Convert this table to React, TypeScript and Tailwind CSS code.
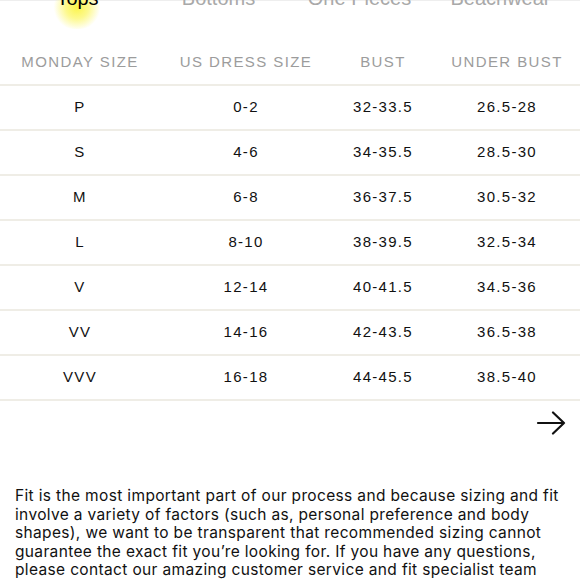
const tabs = ['Tops', 'Bottoms', 'One Pieces', 'Beachwear'];

const rows = [
  ['P', '0-2', '32-33.5', '26.5-28'],
  ['S', '4-6', '34-35.5', '28.5-30'],
  ['M', '6-8', '36-37.5', '30.5-32'],
  ['L', '8-10', '38-39.5', '32.5-34'],
  ['V', '12-14', '40-41.5', '34.5-36'],
  ['VV', '14-16', '42-43.5', '36.5-38'],
  ['VVV', '16-18', '44-45.5', '38.5-40'],
];

const cols = 'grid grid-cols-[160px_172px_102px_146px]';

export default function App() {
  return (
    <div className="w-[580px] h-[580px] overflow-hidden bg-white font-['Liberation_Sans',Arial,sans-serif] text-[#111]">
      {/* tabs, scrolled mostly out of view */}
      <div className="relative h-[14px] border-t border-[#eee]">
        <div className="absolute left-[52px] top-[-16px] w-[50px] h-[44px] rounded-full bg-[radial-gradient(circle,#fbf44a_0%,#fdf98f_35%,rgba(255,255,255,0)_70%)]" />
        <div className="relative flex pl-[7px] -mt-[15px] text-[20px] leading-[24px]">
          {tabs.map((t, i) => (
            <div
              key={t}
              className={(i === 0 ? 'text-black ' : 'text-[#a9a9a9] ') + 'w-[141px] text-center'}
            >
              {t}
            </div>
          ))}
        </div>
      </div>

      {/* size table */}
      <div className={cols + ' h-[70px] items-end pb-[11px] text-[15px] tracking-[1.4px] text-[#9c9c9c]'}>
        <div className="text-center">MONDAY SIZE</div>
        <div className="text-center">US DRESS SIZE</div>
        <div className="text-center">BUST</div>
        <div className="text-center">UNDER BUST</div>
      </div>
      {rows.map((r) => (
        <div key={r[0]} className={cols + ' h-[45px] items-center border-t-2 border-[#efede6] text-[15px] tracking-[1.3px]'}>
          {r.map((c, j) => (
            <div key={j} className="text-center">
              {c}
            </div>
          ))}
        </div>
      ))}
      <div className="border-t-2 border-[#efede6]" />

      <div className="flex justify-end pr-[14px] pt-[10px]">
        <svg width="30" height="24" viewBox="0 0 30 24" fill="none" stroke="#111" strokeWidth="2.2" strokeLinecap="round" strokeLinejoin="round">
          <path d="M2 12h26M17 1.5L28 12 17 22.5" />
        </svg>
      </div>

      <p className="pl-[15px] pr-[10px] pt-[52px] font-['Inter',sans-serif] text-[15.5px] leading-[18.5px] tracking-[0.35px] text-[#111]">
        Fit is the most important part of our process and because sizing and fit involve a variety of factors (such as, personal preference and body shapes), we want to be transparent that recommended sizing cannot guarantee the exact fit you’re looking for. If you have any questions, please contact our amazing customer service and fit specialist team
      </p>
    </div>
  );
}
